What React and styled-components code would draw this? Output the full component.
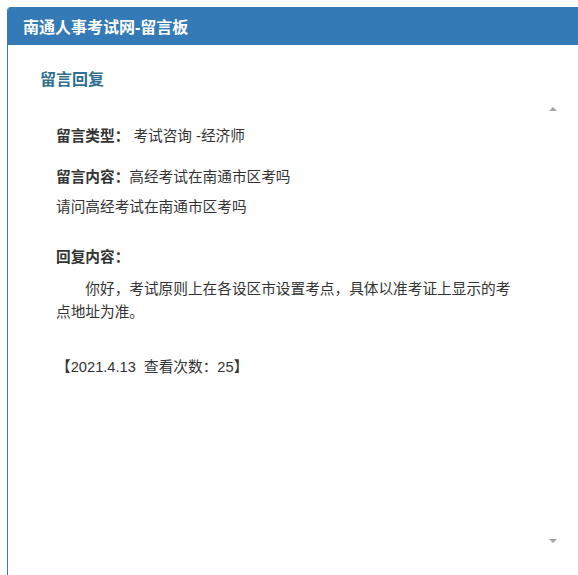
import React from 'react';
import styled, { createGlobalStyle } from 'styled-components';

const GlobalStyle = createGlobalStyle`
  html, body {
    margin: 0;
    padding: 0;
    overflow: hidden;
    background: #fff;
  }
  body {
    font-family: "Liberation Sans", "Noto Sans CJK SC", sans-serif;
    color: #333;
  }
`;

const message = {
  type: '考试咨询 -经济师',
  title: '高经考试在南通市区考吗',
  body: '请问高经考试在南通市区考吗',
  reply: '你好，考试原则上在各设区市设置考点，具体以准考证上显示的考点地址为准。',
  date: '2021.4.13',
  views: 25,
};

const App = () => {
  return (
    <>
      <GlobalStyle />
      <Page>
        <Panel>
          <Header>南通人事考试网-留言板</Header>
          <Body>
            <Heading>留言回复</Heading>
            <ScrollBox>
              <Content>
                <Field gap={18}>
                  <Label>留言类型：</Label> {message.type}
                </Field>
                <Field gap={7}>
                  <Label>留言内容：</Label>{message.title}
                </Field>
                <Field gap={27}>{message.body}</Field>
                <Field gap={9}>
                  <Label>回复内容：</Label>
                </Field>
                <Reply gap={32}>{message.reply}</Reply>
                <Field>【{message.date}&nbsp; 查看次数：{message.views}】</Field>
              </Content>
              <ScrollBar>
                <Arrow up />
                <Arrow />
              </ScrollBar>
            </ScrollBox>
          </Body>
        </Panel>
      </Page>
    </>
  );
};

const Page = styled.div`
  height: 100vh;
  box-sizing: border-box;
  padding: 7px 0 0 7px;
  display: flex;
`;

const Panel = styled.div`
  flex: 1;
  min-width: 0;
  border-left: 1px solid #337ab7;
  border-top-left-radius: 4px;
  background: #fff;
  overflow: hidden;
`;

const Header = styled.div`
  height: 38px;
  display: flex;
  align-items: center;
  padding-left: 15px;
  background-color: #337ab7;
  color: #fff;
  font-size: 16px;
  font-weight: bold;
`;

const Body = styled.div`
  padding: 24px 0 0 32px;
`;

const Heading = styled.h3`
  margin: 0;
  font-size: 16px;
  line-height: 22px;
  font-weight: 600;
  color: #31708f;
`;

const ScrollBox = styled.div`
  margin-top: 8px;
  width: 521px;
  height: 452px;
  display: flex;
`;

const Content = styled.div`
  flex: 1;
  padding: 25.5px 28px 0 16px;
  font-size: 11pt;
  line-height: 23px;
`;

const Field = styled.p`
  margin: 0 0 ${p => p.gap || 0}px;
`;

const Label = styled.b`
  font-weight: bold;
`;

const Reply = styled(Field)`
  text-indent: 2em;
`;

const ScrollBar = styled.div`
  width: 16px;
  display: flex;
  flex-direction: column;
  justify-content: space-between;
  align-items: center;
  padding: 8px 0;
`;

const Arrow = styled.span`
  width: 0;
  height: 0;
  border-left: 4px solid transparent;
  border-right: 4px solid transparent;
  ${p => p.up
    ? 'border-bottom: 4px solid #a3a3a3;'
    : 'border-top: 4px solid #a3a3a3;'}
`;

export default App;
